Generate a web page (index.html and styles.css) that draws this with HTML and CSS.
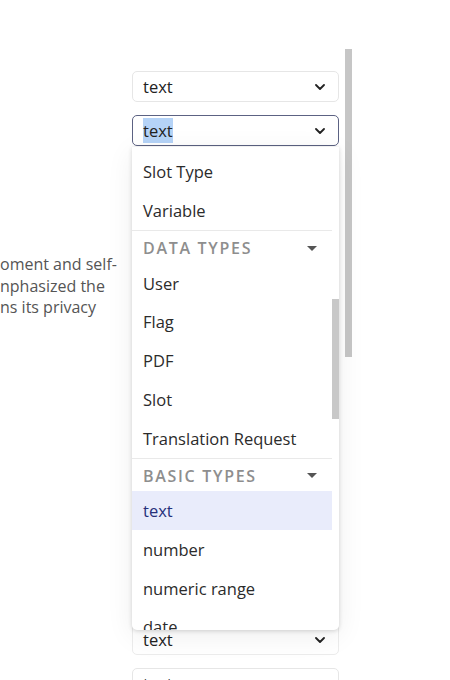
FILE: index.html
```html
<!DOCTYPE html>
<html lang="en">
<head>
<meta charset="utf-8">
<title>Type picker</title>
<link rel="stylesheet" href="styles.css">
</head>
<body>
<div class="page">
  <div class="left">
    <div class="line">oment and self-</div>
    <div class="line">nphasized the</div>
    <div class="line">ns its privacy</div>
  </div>
  <div class="right">
    <div class="select">
      <span class="value">text</span>
      <svg class="chev" width="10" height="6" viewBox="0 0 10 6"><path d="M1 1l4 4 4-4" fill="none" stroke="#222" stroke-width="1.8" stroke-linecap="round" stroke-linejoin="round"/></svg>
    </div>
    <div class="select-wrap">
      <div class="select focused">
        <span class="value"><span class="sel">text</span></span>
        <svg class="chev" width="10" height="6" viewBox="0 0 10 6"><path d="M1 1l4 4 4-4" fill="none" stroke="#222" stroke-width="1.8" stroke-linecap="round" stroke-linejoin="round"/></svg>
      </div>
      <div class="dropdown">
        <div class="list">
          <div class="item">Slot Type</div>
          <div class="item">Variable</div>
          <div class="group">
            <span>DATA TYPES</span>
            <span class="tri"></span>
          </div>
          <div class="item">User</div>
          <div class="item">Flag</div>
          <div class="item">PDF</div>
          <div class="item">Slot</div>
          <div class="item">Translation Request</div>
          <div class="group">
            <span>BASIC TYPES</span>
            <span class="tri"></span>
          </div>
          <div class="item active">text</div>
          <div class="item">number</div>
          <div class="item">numeric range</div>
          <div class="item">date</div>
        </div>
        <div class="thumb"></div>
      </div>
    </div>
    <div class="select lower">
      <span class="value">text</span>
      <svg class="chev" width="10" height="6" viewBox="0 0 10 6"><path d="M1 1l4 4 4-4" fill="none" stroke="#222" stroke-width="1.8" stroke-linecap="round" stroke-linejoin="round"/></svg>
    </div>
    <div class="select">
      <span class="value">text</span>
      <svg class="chev" width="10" height="6" viewBox="0 0 10 6"><path d="M1 1l4 4 4-4" fill="none" stroke="#222" stroke-width="1.8" stroke-linecap="round" stroke-linejoin="round"/></svg>
    </div>
  </div>
  <div class="page-thumb"></div>
</div>
</body>
</html>
```

FILE: styles.css
```css
html, body {
  margin: 0;
  padding: 0;
}
body {
  width: 450px;
  height: 680px;
  overflow: hidden;
  background: #ffffff;
  font-family: "Open Sans", "Noto Sans", sans-serif;
}
.page {
  position: relative;
  display: flex;
  height: 680px;
  overflow: hidden;
}
.left {
  width: 132px;
  flex: none;
  padding-top: 254px;
  overflow: hidden;
  font-size: 16px;
  line-height: 21.5px;
  color: #555555;
  white-space: nowrap;
}
.right {
  width: 207px;
  flex: none;
  padding-top: 71px;
  display: flex;
  flex-direction: column;
  gap: 13px;
}
.select {
  box-sizing: border-box;
  height: 31px;
  border: 1px solid #e6e6e6;
  border-radius: 5px;
  background: #fff;
  display: flex;
  align-items: center;
  justify-content: space-between;
  padding: 0 13px 0 10px;
  font-size: 16.5px;
  color: #222;
  flex: none;
}
.select.focused {
  border-color: #5c6283;
}
.select.focused .value {
  margin-top: -1px;
}
.select.lower {
  margin-top: 465px;
  border-color: #ececec;
}
.sel {
  background: #b5d3f7;
  padding: 1px 0;
}
.chev {
  display: block;
}
.select-wrap {
  position: relative;
}
.dropdown {
  position: absolute;
  top: 32px;
  left: 0;
  width: 207px;
  height: 483px;
  background: #fff;
  border-radius: 0 0 5px 5px;
  box-shadow: 0 1px 4px rgba(0,0,0,0.16), 0 6px 28px rgba(0,0,0,0.07);
  overflow: hidden;
  z-index: 5;
}
.list {
  width: 200px;
  padding-top: 5.6px;
}
.item {
  height: 38.75px;
  display: flex;
  align-items: center;
  padding-left: 11px;
  font-size: 16.5px;
  color: #2b2b2b;
}
.item.active {
  background: #e9ecfb;
  color: #26307a;
}
.group {
  box-sizing: border-box;
  height: 33.75px;
  border-top: 1px solid #e9e9e9;
  display: flex;
  align-items: center;
  justify-content: space-between;
  padding: 2px 15px 0 11px;
  font-size: 16px;
  font-weight: 600;
  letter-spacing: 1.7px;
  color: #8e8e8e;
}
.tri {
  width: 0;
  height: 0;
  border-left: 5px solid transparent;
  border-right: 5px solid transparent;
  border-top: 5px solid #555;
}
.thumb {
  position: absolute;
  top: 152px;
  right: 0;
  width: 7px;
  height: 120px;
  background: #c8c8c8;
}
.page-thumb {
  position: absolute;
  left: 345px;
  top: 49px;
  width: 7px;
  height: 308px;
  background: #c6c6c6;
}
```
